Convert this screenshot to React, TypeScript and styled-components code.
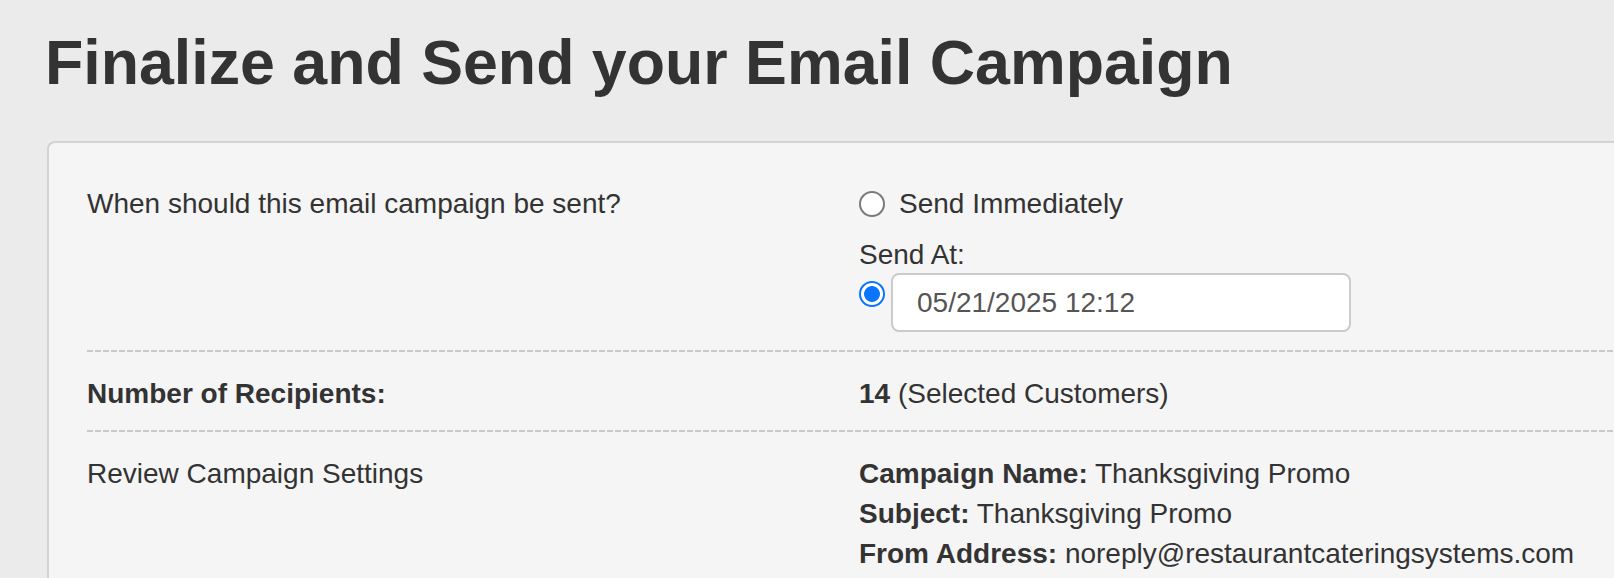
import React from "react";
import styled, { createGlobalStyle } from "styled-components";

const GlobalStyle = createGlobalStyle`
  html, body {
    margin: 0;
    padding: 0;
    background: #ebebeb;
    overflow: hidden;
  }
  body {
    font-family: "Liberation Sans", Arial, Helvetica, sans-serif;
    color: #333333;
  }
`;

const Page = styled.div`
  padding: 28px 0 0 47px;
`;

const Title = styled.h1`
  margin: 0 0 44px -2px;
  font-size: 62.7px;
  line-height: 69px;
  font-weight: 700;
  color: #333333;
  white-space: nowrap;
`;

const Panel = styled.section`
  background: #f5f5f5;
  border: 2px solid #d3d3d3;
  border-right: none;
  border-radius: 8px 0 0 8px;
  padding: 21px 0 0 38px;
  margin-right: -40px;
  min-height: 600px;
`;

const Row = styled.div<{ $divider?: boolean; $top?: number; $bottom?: number }>`
  display: grid;
  grid-template-columns: 772px 1fr;
  padding: ${(p) => p.$top ?? 20}px 0 ${(p) => p.$bottom ?? 20}px;
  font-size: 28px;
  line-height: 40px;
  background: ${(p) =>
    p.$divider
      ? "repeating-linear-gradient(to right, #c9c9c9 0 6px, transparent 6px 8px) left bottom / 100% 2px no-repeat"
      : "none"};
`;

const Label = styled.div<{ $bold?: boolean }>`
  font-weight: ${(p) => (p.$bold ? 700 : 400)};
`;

const Value = styled.div`
  display: flex;
  flex-direction: column;
`;

const RadioLine = styled.label`
  display: flex;
  align-items: center;
  gap: 14px;
`;

const Radio = styled.span<{ $checked?: boolean; $top?: boolean }>`
  box-sizing: border-box;
  flex: none;
  width: 26px;
  height: 26px;
  border-radius: 50%;
  margin-top: ${(p) => (p.$top ? "8px" : "0")};
  border: ${(p) => (p.$checked ? "2.5px solid #0a74ff" : "2px solid #7a7a7a")};
  background: ${(p) =>
    p.$checked
      ? "radial-gradient(circle, #0a74ff 0 7.5px, #ffffff 8.3px)"
      : "#ffffff"};
`;

const SubLabel = styled.div`
  margin-top: 13px;
  line-height: 36px;
`;

const DateRow = styled.div`
  display: flex;
  align-items: flex-start;
  gap: 6px;
`;

const DateInput = styled.input`
  box-sizing: border-box;
  width: 460px;
  height: 59px;
  padding: 0 24px;
  border: 2px solid #cbcbcb;
  border-radius: 8px;
  background: #ffffff;
  color: #555555;
  font-family: "Liberation Sans", Arial, Helvetica, sans-serif;
  font-size: 28px;
  outline: none;
`;

const Line = styled.div``;

const B = styled.strong`
  font-weight: 700;
`;

export default function App() {
  return (
    <>
      <GlobalStyle />
      <Page>
        <Title>Finalize and Send your Email Campaign</Title>
        <Panel>
          <Row $divider>
            <Label>When should this email campaign be sent?</Label>
            <Value>
              <RadioLine>
                <Radio />
                <span>Send Immediately</span>
              </RadioLine>
              <SubLabel>Send At:</SubLabel>
              <DateRow>
                <Radio $checked $top />
                <DateInput readOnly defaultValue="05/21/2025 12:12" />
              </DateRow>
            </Value>
          </Row>
          <Row $divider $top={22} $bottom={18}>
            <Label $bold>Number of Recipients:</Label>
            <Value>
              <Line>
                <B>14</B> (Selected Customers)
              </Line>
            </Value>
          </Row>
          <Row $top={22} $bottom={18}>
            <Label>Review Campaign Settings</Label>
            <Value>
              <Line>
                <B>Campaign Name:</B> Thanksgiving Promo
              </Line>
              <Line>
                <B>Subject:</B> Thanksgiving Promo
              </Line>
              <Line>
                <B>From Address:</B> noreply@restaurantcateringsystems.com
              </Line>
            </Value>
          </Row>
        </Panel>
      </Page>
    </>
  );
}
